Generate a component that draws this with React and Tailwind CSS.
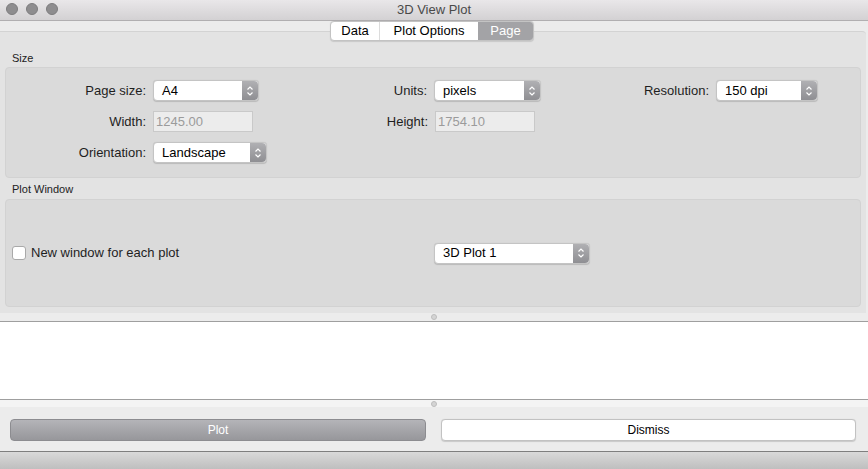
import React from "react";

const font = { fontFamily: '"Liberation Sans", Arial, sans-serif' };

const Stepper = () => (
  <div className="flex h-full w-[16px] items-center justify-center rounded-r-[4px] bg-gradient-to-b from-[#b0b0b3] to-[#8f8f93]">
    <svg width="8" height="12" viewBox="0 0 8 12" fill="none">
      <path d="M1.5 4.5 4 2l2.5 2.5" stroke="white" strokeWidth="1.2" />
      <path d="M1.5 7.5 4 10l2.5-2.5" stroke="white" strokeWidth="1.2" />
    </svg>
  </div>
);

const Select = ({ value, width }) => (
  <div
    className={`flex h-[21px] ${width} items-stretch rounded-[4px] border border-[#c4c4c4] bg-white shadow-[0_0.5px_1px_rgba(0,0,0,0.15)]`}
  >
    <div className="flex flex-1 items-center pl-[8px] text-[13px] text-black">
      {value}
    </div>
    <Stepper />
  </div>
);

const Field = ({ value, width }) => (
  <div
    className={`flex h-[21px] ${width} items-center border border-[#c9c9c9] bg-[#ececec] pl-[2px] text-[13px] text-[#9b9b9b]`}
  >
    {value}
  </div>
);

const Label = ({ children, width }) => (
  <div className={`${width} pr-[7px] text-right text-[13px] text-[#1e1e1e]`}>
    {children}
  </div>
);

const Dot = () => (
  <div className="h-[6px] w-[6px] rounded-full border border-[#bdbdbd] bg-[#d4d4d4]" />
);

export default function App() {
  return (
    <div
      className="flex h-[469px] w-[868px] flex-col overflow-hidden bg-[#ececec]"
      style={font}
    >
      {/* title bar */}
      <div className="relative flex h-[21px] shrink-0 items-center justify-center border-b border-[#b1afb1] bg-gradient-to-b from-[#e9e7e9] to-[#d3d1d3]">
        <div className="absolute left-[6px] top-[3px] flex gap-[8px]">
          <div className="h-[12px] w-[12px] rounded-full border border-[#7d7c7e] bg-[#8e8d8f]" />
          <div className="h-[12px] w-[12px] rounded-full border border-[#7d7c7e] bg-[#8e8d8f]" />
          <div className="h-[12px] w-[12px] rounded-full border border-[#7d7c7e] bg-[#8e8d8f]" />
        </div>
        <span className="text-[13px] text-[#4a4a4a]">3D View Plot</span>
      </div>

      {/* tabs */}
      <div className="relative z-10 -mb-[10px] flex h-[20px] shrink-0 pl-[330px]">
        <div className="flex h-[20px] overflow-hidden rounded-[4px] border border-[#c3c3c3] bg-white text-[13px] shadow-[0_0.5px_1px_rgba(0,0,0,0.12)]">
          <div className="flex w-[49px] items-center justify-center border-r border-[#dcdcdc] text-black">
            Data
          </div>
          <div className="flex w-[98px] items-center justify-center text-black">
            Plot Options
          </div>
          <div className="flex w-[55px] items-center justify-center bg-[#a3a3a6] text-white">
            Page
          </div>
        </div>
      </div>

      {/* tab panel */}
      <div className="mr-[2px] flex h-[282px] shrink-0 flex-col rounded-tr-[4px] border-t border-[#d3d3d3] bg-[#e3e3e3] px-[5px]">
        <div className="flex h-[35px] items-end pb-[2px] pl-[7px] text-[11px] leading-[14px] text-[#222]">
          Size
        </div>
        <div className="flex h-[111px] flex-col gap-[10px] rounded-[4px] border border-[#d2d2d2] bg-[#dadada] pt-[12px]">
          <div className="flex items-center">
            <div className="flex w-[295px] items-center">
              <Label width="w-[147px]">Page size:</Label>
              <Select value="A4" width="w-[106px]" />
            </div>
            <div className="flex w-[282px] items-center">
              <Label width="w-[133px]">Units:</Label>
              <Select value="pixels" width="w-[107px]" />
            </div>
            <div className="flex items-center">
              <Label width="w-[133px]">Resolution:</Label>
              <Select value="150 dpi" width="w-[102px]" />
            </div>
          </div>
          <div className="flex items-center">
            <div className="flex w-[295px] items-center">
              <Label width="w-[147px]">Width:</Label>
              <Field value="1245.00" width="w-[100px]" />
            </div>
            <div className="flex items-center">
              <Label width="w-[134px]">Height:</Label>
              <Field value="1754.10" width="w-[100px]" />
            </div>
          </div>
          <div className="flex items-center">
            <Label width="w-[147px]">Orientation:</Label>
            <Select value="Landscape" width="w-[114px]" />
          </div>
        </div>

        <div className="flex h-[21px] items-end pb-[3px] pl-[7px] text-[11px] leading-[14px] text-[#222]">
          Plot Window
        </div>
        <div className="flex h-[108px] items-center rounded-[4px] border border-[#d2d2d2] bg-[#dadada]">
          <div className="flex w-[428px] items-center pl-[6px]">
            <div className="h-[14px] w-[14px] rounded-[3px] border border-[#a9a9a9] bg-white" />
            <span className="ml-[5px] text-[13px] text-[#1e1e1e]">
              New window for each plot
            </span>
          </div>
          <Select value="3D Plot 1" width="w-[156px]" />
        </div>
      </div>

      {/* splitter + text area */}
      <div className="flex h-[8px] shrink-0 items-center justify-center">
        <Dot />
      </div>
      <div className="h-[79px] shrink-0 border-y border-[#9f9f9f] bg-white" />
      <div className="flex h-[7px] shrink-0 items-center justify-center bg-[#f4f4f4]">
        <Dot />
      </div>

      {/* buttons */}
      <div className="flex h-[44px] shrink-0 gap-[15px] px-[10px] pb-[10px] pt-[12px] pr-[12px]">
        <div className="flex h-[22px] w-[416px] items-center justify-center rounded-[4px] border border-[#8c8c90] bg-gradient-to-b from-[#b4b4b8] to-[#97979b] text-[12px] text-white">
          Plot
        </div>
        <div className="flex h-[22px] flex-1 items-center justify-center rounded-[4px] border border-[#c2c2c2] bg-white text-[12px] text-black shadow-[0_0.5px_1px_rgba(0,0,0,0.15)]">
          Dismiss
        </div>
      </div>

      {/* bottom bar */}
      <div className="flex-1 border-t border-[#7f7f7f] bg-gradient-to-b from-[#d9d9d9] to-[#bfbfbf]" />
    </div>
  );
}
